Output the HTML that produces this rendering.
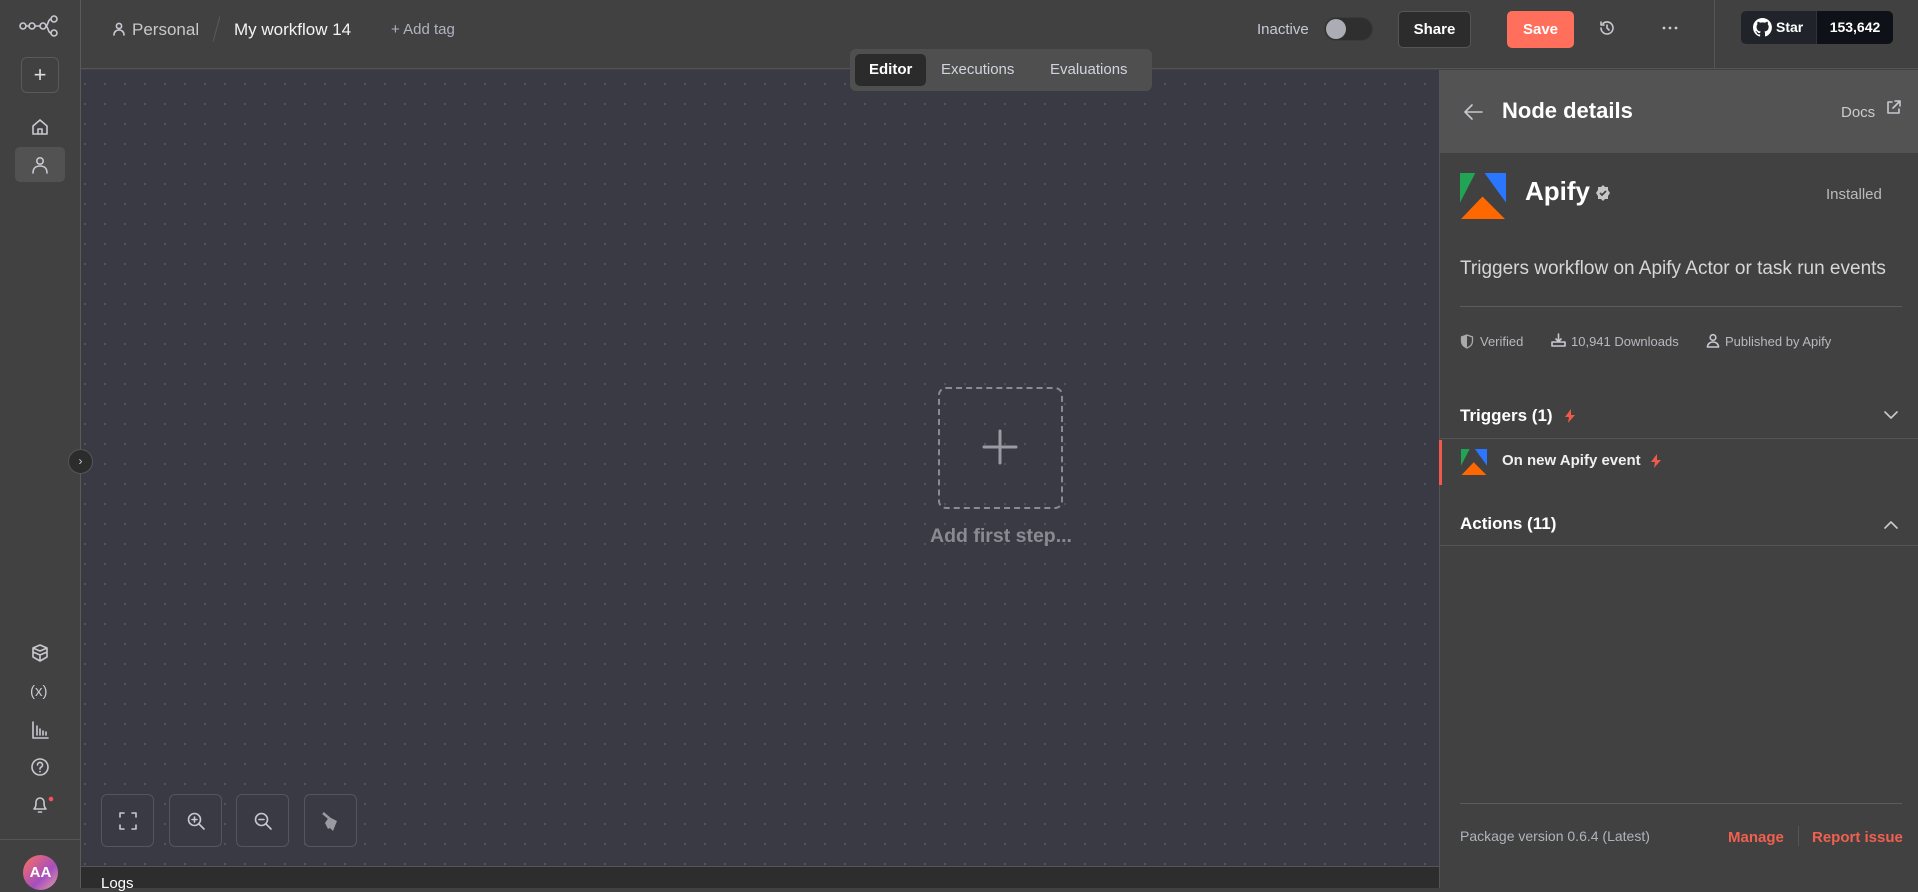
<!DOCTYPE html>
<html><head><meta charset="utf-8"><style>
*{box-sizing:border-box;margin:0;padding:0}
body{width:1918px;height:888px;overflow:hidden;background:#414141;font-family:"Liberation Sans",sans-serif;position:relative;color:#ddd}
.abs{position:absolute}
#side{left:0;top:0;width:81px;height:888px;background:#414141;border-right:1px solid #5a5a5a}
#hdr{left:81px;top:0;width:1837px;height:69px;background:#414141;border-bottom:1px solid #555}
#canvas{left:81px;top:70px;width:1358px;height:796px;background-color:#3a3a44;background-image:radial-gradient(circle,#55555f 1px,transparent 1.2px);background-size:20px 20px;background-position:-6px 4px}
#logs{left:81px;top:866px;width:1358px;height:22px;background:#2d2d2d;border-top:1px solid #555}
#panel{left:1439px;top:70px;width:479px;height:818px;background:#414141;border-left:1px solid #555}
.ico{stroke:#c8c8d0;fill:none;stroke-width:1.6;stroke-linecap:round;stroke-linejoin:round}
.ctl{width:53px;height:53px;border:1px solid #55555d;border-radius:6px;background:#3a3a44}
</style></head><body>
<div id="side" class="abs">
  <svg class="abs" style="left:19px;top:15px" width="40" height="22" viewBox="0 0 40 22"><g class="ico" stroke="#aaa" stroke-width="1.6"><circle cx="4" cy="11" r="3"/><circle cx="13" cy="11" r="3"/><circle cx="24" cy="11" r="3"/><circle cx="35" cy="4" r="3"/><circle cx="35" cy="18" r="3"/><path d="M7 11h3M16 11h5M27 11c2 0 2-7 5-7M27 11c2 0 2 7 5 7"/></g></svg>
  <div class="abs" style="left:21px;top:57px;width:38px;height:36px;border:1px solid #5a5a5a;border-radius:6px;color:#ddd;font-size:22px;line-height:33px;text-align:center">+</div>
  <svg class="abs" style="left:30px;top:117px" width="20" height="20" viewBox="0 0 20 20"><path class="ico" d="M3 9l7-6 7 6v8H3z M8 17v-5h4v5"/></svg>
  <div class="abs" style="left:15px;top:147px;width:50px;height:35px;background:#525252;border-radius:5px"></div>
  <svg class="abs" style="left:30px;top:155px" width="20" height="20" viewBox="0 0 20 20"><circle class="ico" cx="10" cy="6" r="3.2"/><path class="ico" d="M3 18c0-5 3-7 7-7s7 2 7 7"/></svg>
  <svg class="abs" style="left:30px;top:643px" width="20" height="20" viewBox="0 0 20 20"><path class="ico" d="M10 2l7 3-7 3-7-3zM3 5v4l7 3 7-3V5M3 9v5l7 4 7-4V9M10 12v6"/></svg>
  <div class="abs" style="left:30px;top:683px;font-size:15px;color:#c8c8d0">(x)</div>
  <svg class="abs" style="left:30px;top:720px" width="20" height="20" viewBox="0 0 20 20"><path class="ico" d="M3 2v16h15M7 6v9M10 9v6M13 11v4M16 12v3"/></svg>
  <svg class="abs" style="left:30px;top:757px" width="20" height="20" viewBox="0 0 20 20"><circle class="ico" cx="10" cy="10" r="8"/><path class="ico" d="M7.5 8a2.5 2.5 0 1 1 3.5 2.2c-.8.4-1 .9-1 1.8M10 14.5v.3"/></svg>
  <svg class="abs" style="left:30px;top:794px" width="24" height="22" viewBox="0 0 24 22"><path class="ico" d="M4 15c2-2 2-4 2-7a4 4 0 0 1 8 0c0 3 0 5 2 7zM8.5 18h3"/><circle cx="21" cy="5" r="2.3" fill="#ff4d5e"/></svg>
  <div class="abs" style="left:0;top:839px;width:80px;border-top:1px solid #555"></div>
  <div class="abs" style="left:23px;top:855px;width:35px;height:35px;border-radius:50%;background:linear-gradient(135deg,#ff6f5c,#a44fc0 60%,#e8a0a0);color:#fff;font-weight:bold;font-size:15px;line-height:35px;text-align:center">AA</div>
</div>
<div id="hdr" class="abs">
  <svg class="abs" style="left:31px;top:21px" width="14" height="16" viewBox="0 0 14 16"><circle class="ico" cx="7" cy="5" r="2.6" stroke="#bbb" stroke-width="1.3"/><path class="ico" stroke="#bbb" stroke-width="1.3" d="M2 14c0-3 2-5 5-5s5 2 5 5"/></svg>
  <div class="abs" style="left:51px;top:20px;font-size:17px;color:#c8c8c8">Personal</div>
  <div class="abs" style="left:135px;top:16px;width:1px;height:26px;background:#5a5a5a;transform:rotate(15deg)"></div>
  <div class="abs" style="left:153px;top:20px;font-size:17px;color:#f3f3f3">My workflow 14</div>
  <div class="abs" style="left:310px;top:21px;font-size:15px;color:#b0b4c0">+ Add tag</div>
  <div class="abs" style="left:1176px;top:21px;font-size:15px;color:#c6cad4">Inactive</div>
  <div class="abs" style="left:1243px;top:17px;width:49px;height:24px;border-radius:12px;background:#2f2f2f;border:1px solid #3a3a3a"></div>
  <div class="abs" style="left:1245px;top:19px;width:20px;height:20px;border-radius:50%;background:#acacb4"></div>
  <div class="abs" style="left:1317px;top:11px;width:73px;height:37px;border-radius:5px;background:#2c2c2c;border:1px solid #555;color:#fff;font-weight:bold;font-size:15px;line-height:35px;text-align:center">Share</div>
  <div class="abs" style="left:1426px;top:11px;width:67px;height:37px;border-radius:5px;background:#ff6f5c;color:#fff;font-weight:bold;font-size:15px;line-height:37px;text-align:center">Save</div>
  <svg class="abs" style="left:1517px;top:19px" width="18" height="18" viewBox="0 0 18 18"><path class="ico" stroke="#888" stroke-width="1.4" d="M3 9a6 6 0 1 0 2-4.5M3 3v3h3M9 6v3l2 2"/></svg>
  <svg class="abs" style="left:1581px;top:26px" width="16" height="4" viewBox="0 0 16 4"><circle cx="2" cy="2" r="1.4" fill="#ccc"/><circle cx="8" cy="2" r="1.4" fill="#ccc"/><circle cx="14" cy="2" r="1.4" fill="#ccc"/></svg>
  <div class="abs" style="left:1633px;top:0;width:1px;height:69px;background:#555"></div>
  <div class="abs" style="left:1660px;top:11px;width:76px;height:33px;background:#20242a;border-radius:5px 0 0 5px;border-right:1px solid #333"></div>
  <svg class="abs" style="left:1672px;top:18px" width="19" height="19" viewBox="0 0 16 16"><path fill="#fff" d="M8 0a8 8 0 0 0-2.5 15.6c.4 0 .5-.2.5-.4v-1.5c-2.2.5-2.7-1-2.7-1-.4-.9-.9-1.2-.9-1.2-.7-.5.1-.5.1-.5.8.1 1.2.8 1.2.8.7 1.3 1.900.9 2.4.7 0-.5.3-.9.5-1.1-1.8-.2-3.6-.9-3.6-4 0-.9.3-1.6.8-2.100-.1-.2-.4-1 .1-2.100 0 0 .7-.2 2.2.8a7.500 7.500 0 0 1 4 0c1.500-1 2.200-.8 2.200-.8.4 1.100.2 1.900.1 2.100.5.6.8 1.300.8 2.100 0 3.100-1.900 3.800-3.600 4 .3.3.5.8.5 1.500v2.200c0 .2.1.5.6.4A8 8 0 0 0 8 0z"/></svg>
  <div class="abs" style="left:1695px;top:19px;font-size:14px;font-weight:bold;color:#fff">Star</div>
  <div class="abs" style="left:1736px;top:11px;width:76px;height:33px;background:#0e1117;border-radius:0 5px 5px 0;color:#fff;font-weight:bold;font-size:14px;line-height:33px;text-align:center">153,642</div>
</div>
<div id="canvas" class="abs">
  <div class="abs" style="left:857px;top:317px;width:125px;height:122px;border:2px dashed #8a8a92;border-radius:8px"></div>
  <svg class="abs" style="left:899px;top:357px" width="40" height="40" viewBox="0 0 40 40"><path d="M20 4v32M4 20h32" stroke="#9a9aa2" stroke-width="3" stroke-linecap="round"/></svg>
  <div class="abs" style="left:840px;top:455px;width:160px;text-align:center;font-size:19.5px;font-weight:bold;color:#8a8a92">Add first step...</div>
  <div class="ctl abs" style="left:20px;top:724px"></div>
  <div class="ctl abs" style="left:88px;top:724px"></div>
  <div class="ctl abs" style="left:155px;top:724px"></div>
  <div class="ctl abs" style="left:223px;top:724px"></div>
  <svg class="abs" style="left:37px;top:741px" width="20" height="20" viewBox="0 0 20 20"><path class="ico" stroke="#bbb" d="M2 6V2h4M14 2h4v4M18 14v4h-4M6 18H2v-4"/></svg>
  <svg class="abs" style="left:105px;top:741px" width="20" height="20" viewBox="0 0 20 20"><circle class="ico" stroke="#bbb" cx="8.5" cy="8.5" r="6"/><path class="ico" stroke="#bbb" d="M13 13l5 5M8.5 6v5M6 8.5h5"/></svg>
  <svg class="abs" style="left:172px;top:741px" width="20" height="20" viewBox="0 0 20 20"><circle class="ico" stroke="#bbb" cx="8.5" cy="8.5" r="6"/><path class="ico" stroke="#bbb" d="M13 13l5 5M6 8.5h5"/></svg>
  <svg class="abs" style="left:240px;top:741px" width="22" height="22" viewBox="0 0 22 22"><path d="M2 2l7 6" stroke="#9a9aa2" stroke-width="2.5"/><path d="M8 6l8 4-4 10-3-3-2 1-3-6z" fill="#9a9aa2"/></svg>
</div>
<div class="abs" style="left:68px;top:449px;width:25px;height:25px;border-radius:50%;background:#2c2c2c;border:1px solid #555;color:#ccc;font-size:12px;line-height:22px;text-align:center">›</div>
<div class="abs" style="left:850px;top:49px;width:302px;height:42px;background:#4f4f4f;border-radius:6px"></div>
<div class="abs" style="left:855px;top:54px;width:71px;height:32px;background:#2b2b2b;border-radius:5px"></div>
<div class="abs" style="left:869px;top:61px;font-size:15px;font-weight:bold;color:#fff">Editor</div>
<div class="abs" style="left:941px;top:61px;font-size:15px;color:#d0d4dc">Executions</div>
<div class="abs" style="left:1050px;top:61px;font-size:15px;color:#d0d4dc">Evaluations</div>
<div id="logs" class="abs"><div class="abs" style="left:20px;top:8px;font-size:15px;color:#fff">Logs</div></div>
<div id="panel" class="abs">
  <div class="abs" style="left:0;top:0;width:479px;height:83px;background:#535353"></div>
  <svg class="abs" style="left:22px;top:32px" width="22" height="20" viewBox="0 0 22 20"><path class="ico" stroke="#bbb" stroke-width="2" d="M20 10H3M10 3L3 10l7 7"/></svg>
  <div class="abs" style="left:62px;top:28px;font-size:22px;font-weight:bold;color:#fff">Node details</div>
  <div class="abs" style="left:401px;top:34px;font-size:15px;color:#ccc">Docs</div>
  <svg class="abs" style="left:446px;top:30px" width="15" height="15" viewBox="0 0 15 15"><path class="ico" stroke="#ccc" stroke-width="1.4" d="M6 2H2v11h11V9M9 1h5v5M14 1L7 8"/></svg>
  <svg class="abs" style="left:20px;top:103px" width="46" height="46" viewBox="0 0 45 45"><path d="M0 0h15L0 29z" fill="#21a453"/><path d="M24 0h21v29z" fill="#2b76ff"/><path d="M22 23l22 22H1z" fill="#ff6700"/></svg>
  <div class="abs" style="left:85px;top:106px;font-size:26px;font-weight:bold;color:#fff">Apify</div>
  <svg class="abs" style="left:155px;top:115px" width="16" height="16" viewBox="0 0 16 16"><path d="M8 0l2 2h3v3l2 3-2 3v3h-3l-2 2-2-2H3v-3L1 8l2-3V2h3z" fill="#c6c6c6"/><path d="M5 8l2 2 4-4" stroke="#414141" stroke-width="1.7" fill="none"/></svg>
  <div class="abs" style="left:386px;top:116px;font-size:15px;color:#bbb">Installed</div>
  <div class="abs" style="left:20px;top:188px;font-size:19px;color:#d6d6d6">Triggers workflow on Apify Actor or task run events</div>
  <div class="abs" style="left:20px;top:236px;width:442px;border-top:1px solid #5c5c5c"></div>
  <svg class="abs" style="left:20px;top:264px" width="14" height="15" viewBox="0 0 14 15"><path d="M7 1l5.5 2v4c0 4-3 6-5.5 7C4.5 13 1.5 11 1.5 7V3z" fill="none" stroke="#aaa" stroke-width="1.3"/><path d="M7 1v13C4.5 13 1.5 11 1.5 7V3z" fill="#aaa"/></svg>
  <div class="abs" style="left:40px;top:264px;font-size:13px;color:#b8b8c0">Verified</div>
  <svg class="abs" style="left:111px;top:263px" width="15" height="15" viewBox="0 0 15 15"><path class="ico" stroke="#aaa" stroke-width="1.2" d="M7.5 1v7M5 6l2.5 2.5L10 6M1 9h13v4H1z"/></svg>
  <div class="abs" style="left:131px;top:264px;font-size:13px;color:#b8b8c0">10,941 Downloads</div>
  <svg class="abs" style="left:266px;top:263px" width="14" height="15" viewBox="0 0 14 15"><circle class="ico" stroke="#aaa" stroke-width="1.2" cx="7" cy="4.5" r="2.8"/><path class="ico" stroke="#aaa" stroke-width="1.2" d="M1.5 14c0-3 2.5-5 5.5-5s5.5 2 5.5 5z"/></svg>
  <div class="abs" style="left:285px;top:264px;font-size:13px;color:#b8b8c0">Published by Apify</div>
  <div class="abs" style="left:20px;top:336px;font-size:17px;font-weight:bold;color:#fff">Triggers (1)</div>
  <svg class="abs" style="left:124px;top:339px" width="12" height="14" viewBox="0 0 12 14"><path d="M7 0L1 8h4l-1 6 7-8H7z" fill="#ef5a4a"/></svg>
  <svg class="abs" style="left:444px;top:340px" width="14" height="10" viewBox="0 0 14 10"><path class="ico" stroke="#bbb" d="M1 2l6 6 6-6"/></svg>
  <div class="abs" style="left:-1px;top:368px;width:480px;border-top:1px solid #555"></div>
  <div class="abs" style="left:-1px;top:370px;width:3px;height:45px;background:#ef5a4a"></div>
  <svg class="abs" style="left:21px;top:379px" width="26" height="26" viewBox="0 0 45 45"><path d="M0 0h15L0 29z" fill="#21a453"/><path d="M24 0h21v29z" fill="#2b76ff"/><path d="M22 23l22 22H1z" fill="#ff6700"/></svg>
  <div class="abs" style="left:62px;top:382px;font-size:15px;font-weight:bold;color:#f0f0f0">On new Apify event</div>
  <svg class="abs" style="left:210px;top:384px" width="12" height="14" viewBox="0 0 12 14"><path d="M7 0L1 8h4l-1 6 7-8H7z" fill="#ef5a4a"/></svg>
  <div class="abs" style="left:20px;top:444px;font-size:17px;font-weight:bold;color:#fff">Actions (11)</div>
  <svg class="abs" style="left:444px;top:450px" width="14" height="10" viewBox="0 0 14 10"><path class="ico" stroke="#bbb" d="M1 8l6-6 6 6"/></svg>
  <div class="abs" style="left:-1px;top:475px;width:480px;border-top:1px solid #555"></div>
  <div class="abs" style="left:20px;top:733px;width:442px;border-top:1px solid #5c5c5c"></div>
  <div class="abs" style="left:20px;top:758px;font-size:14px;color:#b0b4bc">Package version 0.6.4 (Latest)</div>
  <div class="abs" style="left:288px;top:759px;font-size:15px;font-weight:bold;color:#f1604f">Manage</div>
  <div class="abs" style="left:358px;top:756px;width:1px;height:20px;background:#555"></div>
  <div class="abs" style="left:372px;top:759px;font-size:15px;font-weight:bold;color:#f1604f">Report issue</div>
</div>
</body></html>
